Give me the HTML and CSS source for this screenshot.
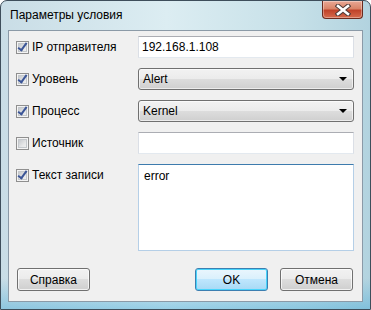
FILE: index.html
```html
<!DOCTYPE html>
<html lang="ru">
<head>
  <meta charset="UTF-8">
  <title>Параметры условия</title>
  <link rel="stylesheet" href="styles.css">
</head>
<body>
  <div class="window">
    <!-- заголовок окна -->
    <div class="titlebar">
      <span class="title">Параметры условия</span>
      <button class="close-btn" title="Закрыть">
        <svg width="16" height="12" viewBox="0 0 16 12">
          <path d="M3 2 L13 10 M13 2 L3 10" stroke="#4d3a37" stroke-width="4.6" stroke-linecap="square"/>
          <path d="M3 2 L13 10 M13 2 L3 10" stroke="#ffffff" stroke-width="2.6" stroke-linecap="square"/>
        </svg>
      </button>
    </div>

    <!-- клиентская область -->
    <div class="client">
      <div class="rows">
        <div class="row">
          <label class="check"><span class="box checked"></span>IP отправителя</label>
          <input class="edit" type="text" value="192.168.1.108">
        </div>
        <div class="row">
          <label class="check"><span class="box checked"></span>Уровень</label>
          <div class="combo"><span>Alert</span><span class="arrow"></span></div>
        </div>
        <div class="row">
          <label class="check"><span class="box checked"></span>Процесс</label>
          <div class="combo"><span>Kernel</span><span class="arrow"></span></div>
        </div>
        <div class="row">
          <label class="check"><span class="box"></span>Источник</label>
          <input class="edit" type="text" value="">
        </div>
        <div class="row row-tall">
          <label class="check"><span class="box checked"></span>Текст записи</label>
          <textarea class="memo">error</textarea>
        </div>
      </div>

      <div class="buttons">
        <button class="btn">Справка</button>
        <span class="spacer"></span>
        <button class="btn btn-default">OK</button>
        <button class="btn">Отмена</button>
      </div>
    </div>
  </div>
</body>
</html>
```

FILE: styles.css
```css
/* общие настройки */
body {
  margin: 0;
  font-family: 'Liberation Sans', Arial, sans-serif;
  font-size: 12px;
  color: #000000;
  background: #ffffff;
}

/* рамка окна */
.window {
  width: 371px;
  height: 310px;
  box-sizing: border-box;
  display: flex;
  flex-direction: column;
  padding: 0 7px 7px;
  border: 1px solid #3e4e5b;
  border-radius: 7px 7px 0 0;
  background:
    linear-gradient(180deg, rgba(255, 255, 255, 0) 90%, rgba(70, 170, 215, 0.45) 100%),
    linear-gradient(90deg, #c9dde6 0%, #dcedf2 45%, #c6e0e8 80%, #b2d3df 100%);
}

/* заголовок */
.titlebar {
  height: 29px;
  display: flex;
  align-items: flex-start;
}

.title {
  margin-left: 2px;
  margin-top: 7px;
  font-size: 12px;
  color: #000000;
}

.close-btn {
  margin-left: auto;
  width: 41px;
  height: 18px;
  padding: 0;
  border: 1px solid #6a2b1f;
  border-top: none;
  border-radius: 0 0 4px 4px;
  background: linear-gradient(180deg, #e9a895 0%, #d98468 45%, #c0432a 55%, #d66b4d 100%);
  box-shadow: inset 0 0 0 1px rgba(255, 255, 255, 0.35);
  display: flex;
  align-items: center;
  justify-content: center;
}

/* клиентская область */
.client {
  flex: 1;
  display: flex;
  flex-direction: column;
  border: 1px solid #8b9aa7;
  background: #f0f0f0;
  padding: 5px 8px 10px 7px;
}

.rows {
  display: flex;
  flex-direction: column;
  gap: 10px;
}

.row {
  display: flex;
  height: 22px;
}

.row-tall {
  height: 87px;
}

/* флажки */
.check {
  width: 122px;
  display: flex;
  align-items: center;
  gap: 3px;
  height: 22px;
}

.box {
  width: 13px;
  height: 13px;
  box-sizing: border-box;
  border: 1px solid #8f8f8f;
  background: linear-gradient(135deg, #b9bdc2 0%, #e6e7e8 60%, #f4f4f4 100%);
  box-shadow: inset 0 0 0 1px #f4f4f4, inset 0 0 0 2px #c4c8cc;
  position: relative;
  flex-shrink: 0;
}

.box.checked::after {
  content: "";
  position: absolute;
  left: 3px;
  top: -1px;
  width: 3px;
  height: 8px;
  border-right: 2px solid #3b5597;
  border-bottom: 2px solid #3b5597;
  transform: rotate(36deg);
}

/* поле ввода */
.edit,
.memo {
  flex: 1;
  box-sizing: border-box;
  margin: 0;
  font-family: inherit;
  font-size: 12px;
  color: #000000;
  background: #ffffff;
  outline: none;
}

.edit {
  height: 22px;
  padding: 0 3px;
  border: 1px solid #dbdfe6;
  border-top-color: #abadb3;
  border-bottom-color: #e3e9ef;
}

.memo {
  height: 87px;
  padding: 4px 5px;
  resize: none;
  border: 1px solid #b5cfe7;
  border-top-color: #3d7bad;
}

/* выпадающий список */
.combo {
  flex: 1;
  height: 22px;
  box-sizing: border-box;
  display: flex;
  align-items: center;
  padding: 0 6px 0 4px;
  border: 1px solid #707070;
  border-radius: 3px;
  background: linear-gradient(180deg, #f2f2f2 0%, #ebebeb 50%, #dddddd 50%, #cfcfcf 100%);
  box-shadow: inset 0 0 0 1px rgba(255, 255, 255, 0.6);
}

.arrow {
  margin-left: auto;
  width: 0;
  height: 0;
  border-left: 4px solid transparent;
  border-right: 4px solid transparent;
  border-top: 4px solid #000000;
}

/* кнопки */
.buttons {
  margin-top: auto;
  display: flex;
  gap: 12px;
  padding-left: 1px;
  padding-right: 1px;
}

.spacer {
  flex: 1;
}

.btn {
  width: 73px;
  height: 23px;
  padding: 0;
  font-family: inherit;
  font-size: 12px;
  color: #000000;
  border: 1px solid #707070;
  border-radius: 3px;
  background: linear-gradient(180deg, #f2f2f2 0%, #ebebeb 50%, #dddddd 50%, #cfcfcf 100%);
  box-shadow: inset 0 0 0 1px rgba(255, 255, 255, 0.7);
}

.btn-default {
  border-color: #3c7fb1;
  background: linear-gradient(180deg, #eaf6fd 0%, #d9f0fc 50%, #bee6fd 50%, #a7d9f5 100%);
  box-shadow: inset 0 0 0 1px #48d4fb;
}
```
